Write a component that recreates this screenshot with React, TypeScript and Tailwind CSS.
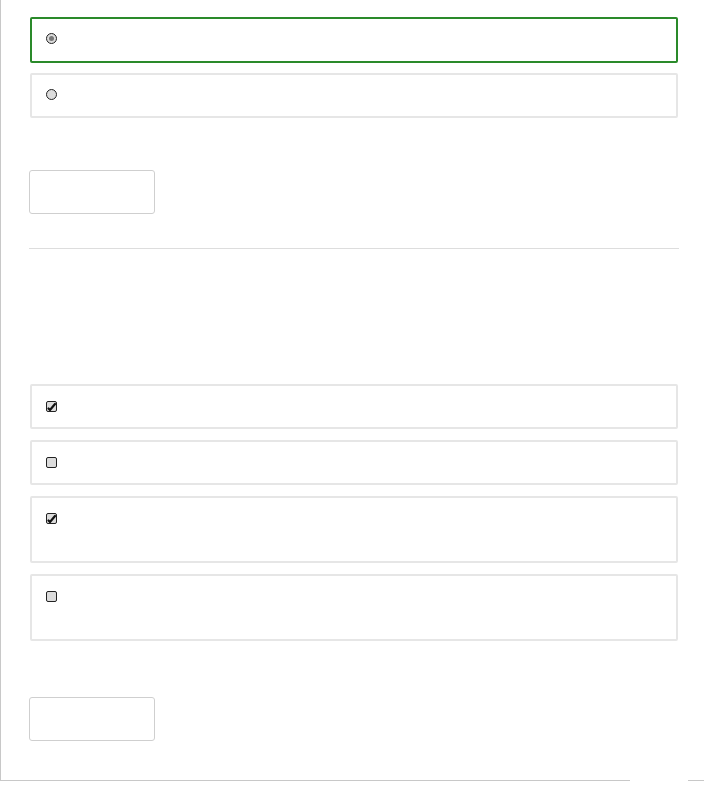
import React from 'react';

const Radio = ({ checked }: { checked?: boolean }) => (
  <span className="flex h-[11px] w-[11px] items-center justify-center rounded-full border border-[#222] bg-[#dcdcdc]">
    {checked && <span className="h-[5px] w-[5px] rounded-full bg-[#777]" />}
  </span>
);

const Checkbox = ({ checked }: { checked?: boolean }) => (
  <span className="flex h-[11px] w-[11px] items-center justify-center rounded-[2px] border border-[#222] bg-[#dcdcdc]">
    {checked && (
      <svg width="9" height="9" viewBox="0 0 9 9">
        <path d="M1.5 6.5 L3 8 L8 2" stroke="#111" strokeWidth="2.2" fill="none" strokeLinecap="round" />
      </svg>
    )}
  </span>
);

const options = [
  { checked: true, tall: false },
  { checked: false, tall: false },
  { checked: true, tall: true },
  { checked: false, tall: true }
];

export default function App() {
  return (
    <div className="w-[704px] font-['Liberation_Sans',sans-serif]">
      <div className="h-[780px] border-l border-[#c8c8c8] pl-[28px] pr-[25px] pt-[17px]">
        <div className="mx-px flex h-[46px] items-start rounded-[2px] border-2 border-[#2a8a2a] pl-[14px] pt-[14px]">
          <Radio checked />
        </div>
        <div className="mx-px mt-[10px] flex h-[45px] items-start rounded-[2px] border-2 border-[#e6e6e6] pl-[14px] pt-[14px]">
          <Radio />
        </div>

        <button className="mt-[52px] block h-[44px] w-[126px] rounded-[3px] border border-[#cfcfcf] bg-white" />

        <div className="mt-[34px] h-px bg-[#dddddd]" />

        <div className="mt-[135px] flex flex-col gap-[11px]">
          {options.map((o, i) => (
            <div
              key={i}
              className={`mx-px flex items-start rounded-[2px] border-2 border-[#e6e6e6] pl-[14px] pt-[15px] ${o.tall ? 'h-[67px]' : 'h-[45px]'}`}
            >
              <Checkbox checked={o.checked} />
            </div>
          ))}
        </div>

        <button className="mt-[56px] block h-[44px] w-[126px] rounded-[3px] border border-[#cfcfcf] bg-white" />
      </div>
      <div className="flex">
        <div className="h-px w-[630px] bg-[#c8c8c8]" />
        <div className="ml-[58px] h-px w-[16px] bg-[#c8c8c8]" />
      </div>
    </div>
  );
}
